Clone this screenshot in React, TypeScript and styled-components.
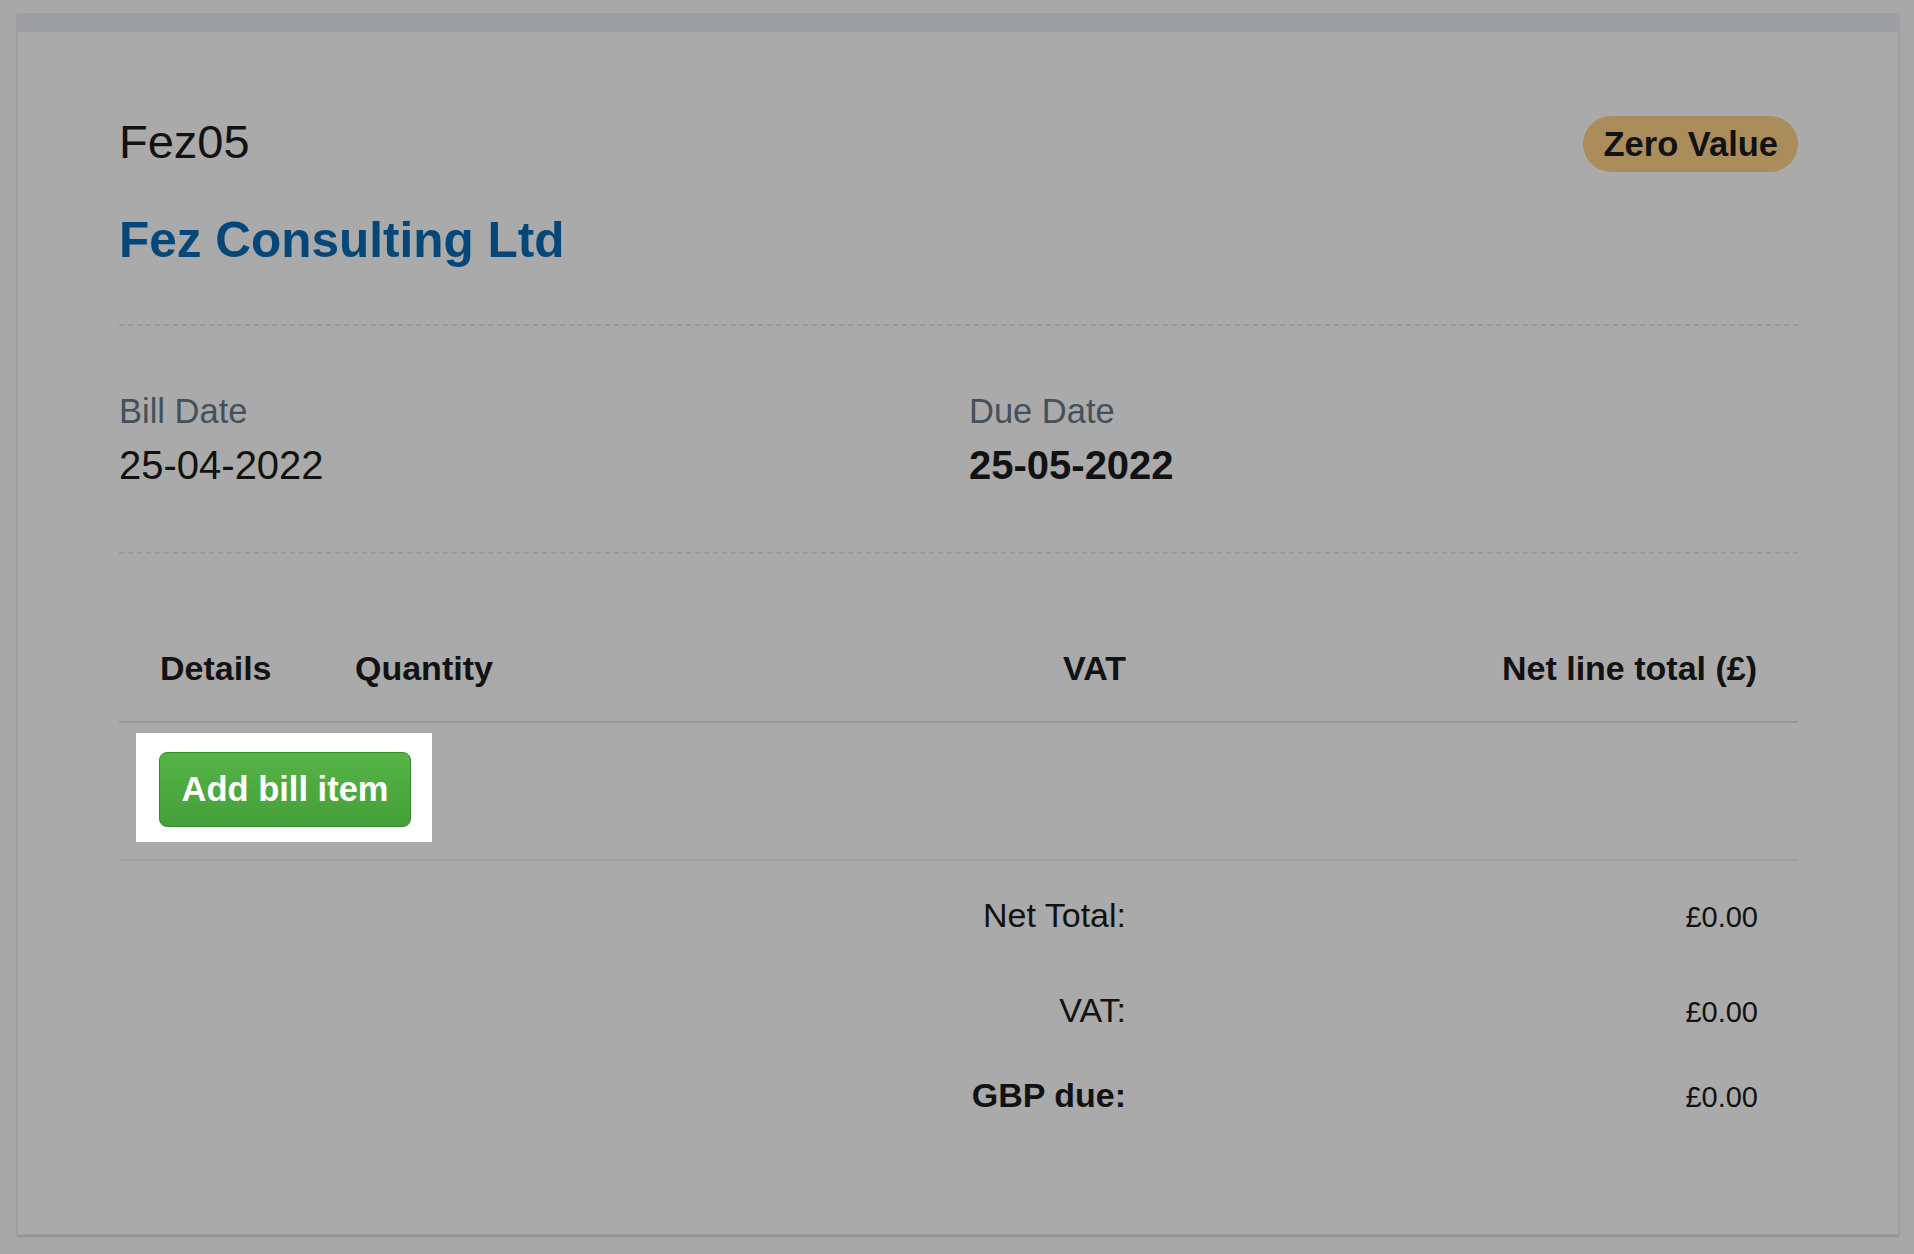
import styled, { createGlobalStyle } from "styled-components";

const GlobalStyle = createGlobalStyle`
  html, body {
    margin: 0;
    padding: 0;
    background: #a8a8a8;
  }
  body {
    font-family: "Liberation Sans", Arial, Helvetica, sans-serif;
    color: #121212;
  }
`;

interface Total {
  label: string;
  value: string;
  strong?: boolean;
  spacing: number;
}

const totals: Total[] = [
  { label: "Net Total:", value: "£0.00", spacing: 34 },
  { label: "VAT:", value: "£0.00", spacing: 53 },
  { label: "GBP due:", value: "£0.00", strong: true, spacing: 43 },
];

const App = () => {
  return (
    <>
      <GlobalStyle />
      <Page>
        <Card>
          <TopStrip />
          <CardBody>
            <TitleRow>
              <Reference>Fez05</Reference>
              <StatusPill>Zero Value</StatusPill>
            </TitleRow>
            <Supplier>Fez Consulting Ltd</Supplier>

            <Divider />

            <Dates>
              <DateBlock>
                <DateLabel>Bill Date</DateLabel>
                <DateValue>25-04-2022</DateValue>
              </DateBlock>
              <DateBlock>
                <DateLabel>Due Date</DateLabel>
                <DateValue $strong>25-05-2022</DateValue>
              </DateBlock>
            </Dates>

            <Divider />

            <Table>
              <HeadRow>
                <HeadCell>Details</HeadCell>
                <HeadCell>Quantity</HeadCell>
                <HeadCell $right>VAT</HeadCell>
                <HeadCell $right>Net line total (£)</HeadCell>
              </HeadRow>
              <ItemRow>
                <Spotlight>
                  <AddButton type="button">Add bill item</AddButton>
                </Spotlight>
              </ItemRow>
            </Table>

            <Totals>
              {totals.map((t) => (
                <TotalRow key={t.label} $spacing={t.spacing}>
                  <TotalLabel $strong={t.strong}>{t.label}</TotalLabel>
                  <TotalValue>{t.value}</TotalValue>
                </TotalRow>
              ))}
            </Totals>
          </CardBody>
        </Card>
      </Page>
    </>
  );
};

export default App;

const Page = styled.div`
  padding: 13px 15px 17px 17px;
`;

const Card = styled.div`
  background: #aaaaaa;
  border: 1px solid #9da0a3;
  box-shadow: 0 2px 2px rgba(70, 75, 80, 0.25);
  height: 1222px;
  box-sizing: border-box;
`;

const TopStrip = styled.div`
  height: 18px;
  background: #9c9ea1;
`;

const CardBody = styled.div`
  padding: 81px 100px 0 101px;
`;

const TitleRow = styled.div`
  display: flex;
  justify-content: space-between;
  align-items: flex-start;
`;

const Reference = styled.div`
  font-size: 47px;
  line-height: 58px;
  color: #121212;
`;

const StatusPill = styled.div`
  margin-top: 3px;
  height: 56px;
  padding: 0 20px 0 21px;
  border-radius: 28px;
  background: #ab8d5c;
  display: flex;
  align-items: center;
  font-size: 34.5px;
  font-weight: 700;
  color: #121212;
`;

const Supplier = styled.div`
  margin: 38px 0 54px;
  font-size: 49.5px;
  line-height: 60px;
  font-weight: 700;
  color: #064779;
`;

const Divider = styled.div`
  height: 2px;
  background: repeating-linear-gradient(
    to right,
    #979b9f 0 5px,
    transparent 5px 9px
  );
`;

const Dates = styled.div`
  display: grid;
  grid-template-columns: 850px 1fr;
  padding: 64px 0 63px;
`;

const DateBlock = styled.div`
  display: flex;
  flex-direction: column;
  gap: 9px;
`;

const DateLabel = styled.div`
  font-size: 34.5px;
  line-height: 42px;
  color: #44505a;
`;

const DateValue = styled.div<{ $strong?: boolean }>`
  font-size: 40px;
  line-height: 48px;
  font-weight: ${(p) => (p.$strong ? 700 : 400)};
  color: #121212;
`;

const Table = styled.div`
  margin-top: 61px;
`;

const HeadRow = styled.div`
  display: grid;
  grid-template-columns: 195px 653px 200px 631px;
  border-bottom: 2px solid #94989c;
`;

const HeadCell = styled.div<{ $right?: boolean }>`
  padding: 33px 41px 33px;
  font-size: 34px;
  line-height: 40px;
  font-weight: 700;
  text-align: ${(p) => (p.$right ? "right" : "left")};
  color: #121212;
`;

const ItemRow = styled.div`
  display: flex;
  padding: 10px 17px 17px;
  border-bottom: 2px solid #9c9ea0;
`;

const Spotlight = styled.div`
  background: #ffffff;
  padding: 19px 21px 15px 23px;
`;

const AddButton = styled.button`
  display: block;
  width: 252px;
  height: 75px;
  padding: 0;
  border: 1px solid #3b8a30;
  border-radius: 8px;
  background: linear-gradient(to bottom, #56b447, #449f38);
  color: #ffffff;
  font-family: "Liberation Sans", Arial, sans-serif;
  font-size: 34.5px;
  font-weight: 700;
  cursor: pointer;
`;

const Totals = styled.div`
  display: flex;
  flex-direction: column;
`;

const TotalRow = styled.div<{ $spacing: number }>`
  display: grid;
  grid-template-columns: 1048px 631px;
  align-items: baseline;
  margin-top: ${(p) => p.$spacing}px;
`;

const TotalLabel = styled.div<{ $strong?: boolean }>`
  padding-right: 41px;
  text-align: right;
  font-size: 34px;
  line-height: 40px;
  font-weight: ${(p) => (p.$strong ? 700 : 400)};
  color: #121212;
`;

const TotalValue = styled.div`
  padding-right: 40px;
  text-align: right;
  font-size: 29px;
  line-height: 40px;
  color: #121212;
`;
